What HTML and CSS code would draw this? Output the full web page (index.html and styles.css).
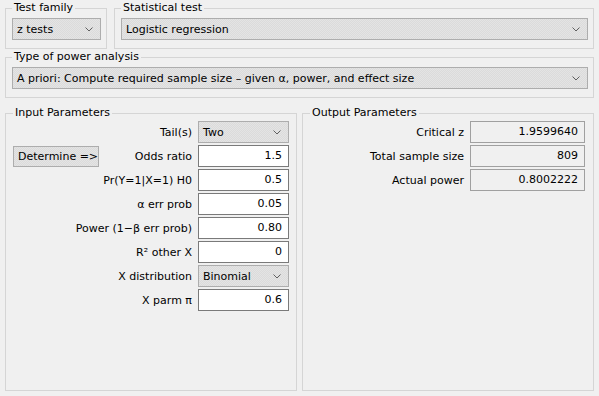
FILE: index.html
```html
<!DOCTYPE html>
<html>
<head>
<meta charset="utf-8">
<link rel="stylesheet" href="styles.css">
</head>
<body>
<div class="app">
  <div class="row top">
    <fieldset class="group family">
      <legend>Test family</legend>
      <div class="combo"><span>z tests</span><svg class="chev" width="8" height="5" viewBox="0 0 8 5"><polyline points="0.5,0.5 4,4 7.5,0.5"/></svg></div>
    </fieldset>
    <fieldset class="group grow">
      <legend>Statistical test</legend>
      <div class="combo"><span>Logistic regression</span><svg class="chev" width="8" height="5" viewBox="0 0 8 5"><polyline points="0.5,0.5 4,4 7.5,0.5"/></svg></div>
    </fieldset>
  </div>
  <div class="row second">
    <fieldset class="group grow">
      <legend>Type of power analysis</legend>
      <div class="combo"><span>A priori: Compute required sample size – given α, power, and effect size</span><svg class="chev" width="8" height="5" viewBox="0 0 8 5"><polyline points="0.5,0.5 4,4 7.5,0.5"/></svg></div>
    </fieldset>
  </div>
  <div class="row params">
    <fieldset class="group panel">
      <legend>Input Parameters</legend>
      <div class="grid-in">
        <div class="lbl c2">Tail(s)</div>
        <div class="combo"><span>Two</span><svg class="chev" width="8" height="5" viewBox="0 0 8 5"><polyline points="0.5,0.5 4,4 7.5,0.5"/></svg></div>

        <div class="btn">Determine =&gt;</div>
        <div class="lbl">Odds ratio</div>
        <div class="field">1.5</div>

        <div class="lbl c2">Pr(Y=1|X=1) H0</div>
        <div class="field">0.5</div>

        <div class="lbl c2">α err prob</div>
        <div class="field">0.05</div>

        <div class="lbl c2">Power (1−β err prob)</div>
        <div class="field">0.80</div>

        <div class="lbl c2">R² other X</div>
        <div class="field">0</div>

        <div class="lbl c2">X distribution</div>
        <div class="combo"><span>Binomial</span><svg class="chev" width="8" height="5" viewBox="0 0 8 5"><polyline points="0.5,0.5 4,4 7.5,0.5"/></svg></div>

        <div class="lbl c2">X parm π</div>
        <div class="field">0.6</div>
      </div>
    </fieldset>
    <fieldset class="group panel">
      <legend>Output Parameters</legend>
      <div class="grid-out">
        <div class="lbl">Critical z</div>
        <div class="field out">1.9599640</div>
        <div class="lbl">Total sample size</div>
        <div class="field out">809</div>
        <div class="lbl">Actual power</div>
        <div class="field out">0.8002222</div>
      </div>
    </fieldset>
  </div>
</div>
</body>
</html>
```
FILE: styles.css
```css
html, body {
  margin: 0;
  padding: 0;
  background: #f0f0f0;
}
body {
  font-family: "DejaVu Sans", "Liberation Sans", sans-serif;
  font-size: 11px;
  color: #000;
}
.app {
  height: 396px;
  box-sizing: border-box;
  display: flex;
  flex-direction: column;
  padding: 1px 5px 5px 5px;
}
.row {
  display: flex;
  gap: 7px;
}
.second {
  margin-top: 1px;
}
.params {
  flex: 1;
  min-height: 0;
  margin-top: 8px;
  gap: 5px;
}
.group {
  margin: 0;
  border: 1px solid #d5d5d5;
  padding: 3px 5px 8px 6px;
  min-width: 0;
  box-sizing: border-box;
}
.group legend {
  padding: 0 2px;
  line-height: 14px;
  height: 14px;
  white-space: nowrap;
}
.family {
  width: 102px;
  flex: none;
}
.grow {
  flex: 1;
}
.panel {
  flex: 1 1 0;
  width: 0;
  padding: 1px 7px 8px 7px;
}
.combo {
  height: 22px;
  box-sizing: border-box;
  border: 1px solid #adadad;
  background: repeating-conic-gradient(#e4e4e4 0 25%, #dbdbdb 0 50%) 0 0 / 2px 2px;
  display: flex;
  align-items: center;
  justify-content: space-between;
  padding: 0 7px 0 4px;
  white-space: nowrap;
  overflow: hidden;
}
.chev {
  flex: none;
}
.chev polyline {
  fill: none;
  stroke: #606060;
  stroke-width: 1;
}
.grid-in {
  display: grid;
  grid-template-columns: 86px minmax(0, 1fr) 91px;
  grid-auto-rows: 22px;
  column-gap: 6px;
  row-gap: 2px;
}
.grid-out {
  display: grid;
  grid-template-columns: minmax(0, 1fr) 115px;
  grid-auto-rows: 22px;
  column-gap: 6px;
  row-gap: 2px;
  padding-right: 1px;
}
.lbl {
  display: flex;
  justify-content: flex-end;
  align-items: center;
  white-space: nowrap;
  min-width: 0;
}
.c2 {
  grid-column: 2;
}
.field {
  box-sizing: border-box;
  border: 1px solid #7a7a7a;
  background: #fff;
  text-align: right;
  line-height: 20px;
  padding-right: 6px;
}
.field.out {
  background: #f0f0f0;
  border-color: #a0a0a0;
}
.btn {
  height: 21px;
  align-self: center;
  box-sizing: border-box;
  border: 1px solid #adadad;
  background: repeating-conic-gradient(#e4e4e4 0 25%, #dbdbdb 0 50%) 0 0 / 2px 2px;
  line-height: 19px;
  padding-left: 4px;
  white-space: nowrap;
}
```
